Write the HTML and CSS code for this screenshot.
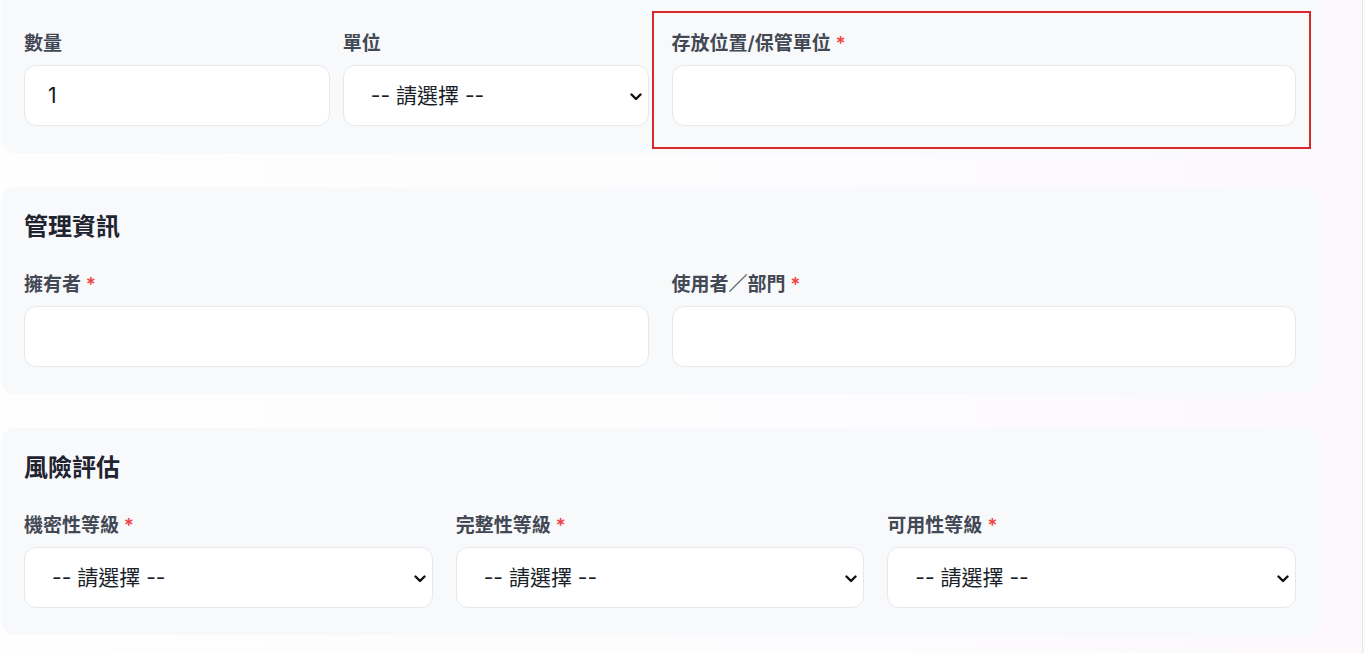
FILE: index.html
```html
<!DOCTYPE html>
<html lang="zh-Hant">
<head>
<meta charset="utf-8">
<title>資產表單</title>
<link rel="stylesheet" href="styles.css">
</head>
<body>
<div class="page">
  <div class="stack">
    <section class="card card-first">
      <div class="grid-2">
        <div class="grid-2 inner">
          <div class="field">
            <label class="label">數量</label>
            <input class="control" type="text" value="1">
          </div>
          <div class="field">
            <label class="label">單位</label>
            <div class="select-wrap">
              <select class="control select"><option>-- 請選擇 --</option></select>
              <svg class="chev" viewBox="0 0 12 8" width="12" height="8"><path d="M1.5 1.5 L6 6 L10.5 1.5" fill="none" stroke="#111" stroke-width="2.4" stroke-linecap="round" stroke-linejoin="round"/></svg>
            </div>
          </div>
        </div>
        <div class="field highlighted">
          <label class="label">存放位置/保管單位 <span class="req">*</span></label>
          <input class="control" type="text" value="">
          <div class="highlight-box"></div>
        </div>
      </div>
    </section>

    <section class="card">
      <h2 class="card-title">管理資訊</h2>
      <div class="grid-2">
        <div class="field">
          <label class="label">擁有者 <span class="req">*</span></label>
          <input class="control" type="text" value="">
        </div>
        <div class="field">
          <label class="label">使用者／部門 <span class="req">*</span></label>
          <input class="control" type="text" value="">
        </div>
      </div>
    </section>

    <section class="card">
      <h2 class="card-title">風險評估</h2>
      <div class="grid-3">
        <div class="field">
          <label class="label">機密性等級 <span class="req">*</span></label>
          <div class="select-wrap">
            <select class="control select"><option>-- 請選擇 --</option></select>
            <svg class="chev" viewBox="0 0 12 8" width="12" height="8"><path d="M1.5 1.5 L6 6 L10.5 1.5" fill="none" stroke="#111" stroke-width="2.4" stroke-linecap="round" stroke-linejoin="round"/></svg>
          </div>
        </div>
        <div class="field">
          <label class="label">完整性等級 <span class="req">*</span></label>
          <div class="select-wrap">
            <select class="control select"><option>-- 請選擇 --</option></select>
            <svg class="chev" viewBox="0 0 12 8" width="12" height="8"><path d="M1.5 1.5 L6 6 L10.5 1.5" fill="none" stroke="#111" stroke-width="2.4" stroke-linecap="round" stroke-linejoin="round"/></svg>
          </div>
        </div>
        <div class="field">
          <label class="label">可用性等級 <span class="req">*</span></label>
          <div class="select-wrap">
            <select class="control select"><option>-- 請選擇 --</option></select>
            <svg class="chev" viewBox="0 0 12 8" width="12" height="8"><path d="M1.5 1.5 L6 6 L10.5 1.5" fill="none" stroke="#111" stroke-width="2.4" stroke-linecap="round" stroke-linejoin="round"/></svg>
          </div>
        </div>
      </div>
    </section>
  </div>
</div>
</body>
</html>
```

FILE: styles.css
```css
* { box-sizing: border-box; }
html, body { margin: 0; padding: 0; }
body {
  font-family: "Inter", "Noto Sans CJK TC", "Noto Sans", sans-serif;
  background: linear-gradient(90deg, #fefefe 0%, #fdfcfe 60%, #fcf8fc 100%);
  color: #1f2937;
  overflow: hidden;
  height: 653px;
}
.page {
  width: 1363px;
  height: 653px;
  border-right: 1px solid #ede3ef;
  padding-left: 2px;
}
.stack {
  width: 1316px;
  display: flex;
  flex-direction: column;
  gap: 34px;
}
.card {
  background: #f8f9fb;
  border-radius: 12px;
  padding: 22px 22px 27px;
}
.card-first {
  margin-top: -40px;
  padding-top: 70px;
}
.card-title {
  margin: 0 0 26px;
  font-size: 24px;
  line-height: 36px;
  font-weight: 700;
  color: #1f2430;
}
.grid-2 {
  display: grid;
  grid-template-columns: 1fr 1fr;
  column-gap: 23px;
}
.grid-2.inner { column-gap: 13px; }
.grid-3 {
  display: grid;
  grid-template-columns: 1fr 1fr 1fr;
  column-gap: 23px;
}
.field {
  display: flex;
  flex-direction: column;
  gap: 8px;
  min-width: 0;
}
.label {
  font-size: 19px;
  line-height: 27px;
  font-weight: 600;
  color: #424854;
}
.req { color: #ef4444; font-weight: 600; }
.control {
  width: 100%;
  height: 61px;
  border: 1px solid #e6e8ec;
  border-radius: 12px;
  background: #ffffff;
  font-family: "Inter", "Noto Sans CJK TC", sans-serif;
  font-size: 21px;
  color: #111827;
  padding: 0 22px 0 23px;
  outline: none;
}
.select-wrap { position: relative; }
.select {
  appearance: none;
  -webkit-appearance: none;
  padding-left: 27px;
  color: #1a1f29;
}
.chev {
  position: absolute;
  right: 7px;
  top: 28px;
  pointer-events: none;
}
.highlighted { position: relative; }
.highlight-box {
  position: absolute;
  left: -20px;
  right: -15px;
  top: -19px;
  bottom: -23px;
  border: 2px solid #d9272e;
  pointer-events: none;
}
```
